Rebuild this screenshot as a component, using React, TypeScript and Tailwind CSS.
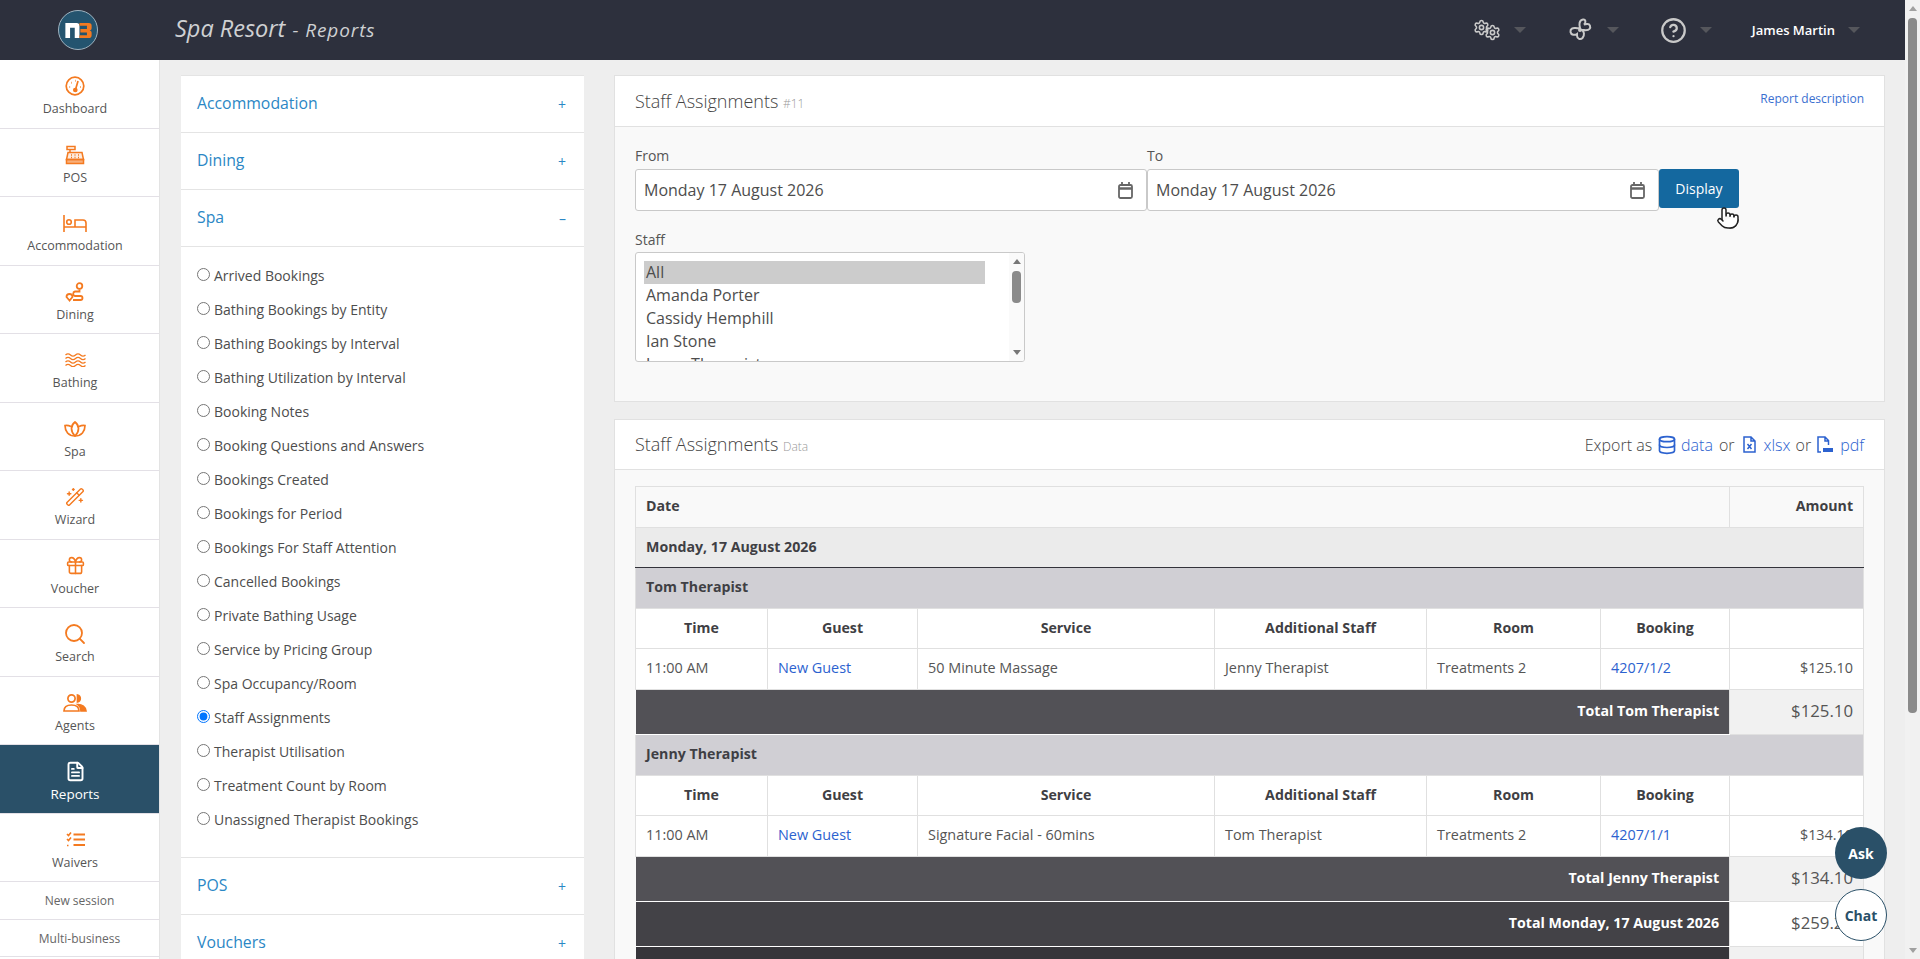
import { Database, FileText, Gift, HelpCircle, Pointer, Search, Settings, WandSparkles } from 'lucide-react'
import type { ReactNode } from 'react'

function RegisterIcon() {
  return (
    <svg width="20" height="20" viewBox="0 0 20 20" fill="none" stroke="currentColor" strokeWidth="1.5">
      <path d="M2 1.500h8v3H2zM5 4.500v3" />
      <path d="M3 7.500h14l1.500 7h-17z" fill="currentColor" fillOpacity="0.15" />
      <path d="M1.500 14.500h17v4h-17z" fill="currentColor" fillOpacity="0.6" />
      <path d="M6 10h1M9.500 10h1M13 10h1M6 12.500h1M9.500 12.500h1M13 12.500h1" />
    </svg>
  )
}

function BedIcon() {
  return (
    <svg width="24" height="17" viewBox="0 0 24 17" fill="none" stroke="currentColor" strokeWidth="1.600">
      <path d="M1 0v17M23 17V8a3 3 0 0 0-3-3h-8v7M1 12h22" />
      <circle cx="6" cy="7" r="2.300" />
    </svg>
  )
}

function RouteIcon() {
  return (
    <svg width="20" height="20" viewBox="0 0 20 20" fill="none" stroke="currentColor" strokeWidth="1.800">
      <circle cx="14.500" cy="4" r="2.800" />
      <path d="M14.500 7.500v2H10a2.300 2.300 0 0 0 0 4.500h5.500a1.800 1.800 0 0 1 0 4H8" />
      <path d="M4.500 18.500l-3-3.500a3 3 0 1 1 6 0z" />
    </svg>
  )
}

function BathIcon() {
  const wave = 'c1.700-1.600 3.300-1.600 5 0s3.300 1.600 5 0 3.300-1.600 5 0 3.300 1.600 5 0'
  return (
    <svg width="21" height="14" viewBox="0 0 21 14" fill="none" stroke="currentColor" strokeWidth="1.300">
      <path d={`M.5 2${wave}`} />
      <path d={`M.5 5.500${wave}`} />
      <path d={`M.5 9${wave}`} />
      <path d={`M.5 12.500${wave}`} />
    </svg>
  )
}

function LotusIcon() {
  return (
    <svg width="22" height="16" viewBox="0 0 22 16" fill="none" stroke="currentColor" strokeWidth="1.700">
      <path d="M11 1c2.500 2 3.500 4 3.500 6.500 0 3-1.500 5.500-3.500 7.500-2-2-3.500-4.500-3.500-7.500C7.500 5 8.500 3 11 1z" />
      <path d="M7 5.500C5 4.500 3 4.300 1 4.500c0 6 3.500 10.500 10 10.500s10-4.500 10-10.500c-2-.200-4 0-6 1" />
    </svg>
  )
}

function DashIcon() {
  return (
    <svg width="20" height="20" viewBox="0 0 20 20" fill="none" stroke="currentColor" strokeWidth="1.700">
      <circle cx="10" cy="10" r="8.800" />
      <path d="M13 5l-2.300 8" />
      <circle cx="10.300" cy="14" r="1.500" fill="currentColor" />
      <path d="M4.500 11h.6M6 6.800h.6M10 4.800h.6M15.200 11h.6" strokeWidth="2" />
    </svg>
  )
}

function AgentsIcon() {
  return (
    <svg width="24" height="18" viewBox="0 0 24 18" fill="none" stroke="currentColor" strokeWidth="1.700">
      <circle cx="8.500" cy="4.500" r="3.600" />
      <path d="M1 17c0-4 3-6 7.500-6s7.500 2 7.500 6z" />
      <path d="M14.500 1a3.600 3.600 0 0 1 0 7z" fill="currentColor" />
      <path d="M15 10.500c4 0 7.500 2.500 8 6.500h-5c0-2.800-1-5-3-6.500z" fill="currentColor" />
    </svg>
  )
}

function WaiversIcon() {
  return (
    <svg width="19" height="15" viewBox="0 0 19 15" fill="none" stroke="currentColor" strokeWidth="1.600">
      <path d="M1 2l1.500 1.500L5 .5M1 7l1.500 1.500L5 5.500" />
      <path d="M1 13.500h3" strokeDasharray="1.500 1.500" />
      <path d="M7.500 2.500H19M7.500 7.500H19M7.500 13H19" strokeWidth="2" />
    </svg>
  )
}

function CalendarIcon() {
  return (
    <svg width="15" height="17" viewBox="0 0 15 17" fill="none" stroke="#666666" strokeWidth="1.800">
      <rect x="1" y="3" width="13" height="13" rx="1.500" />
      <path d="M1 6.500h13" strokeWidth="2.500" />
      <path d="M4 0v3M11 0v3" />
    </svg>
  )
}

const navItems: { label: string; icon: ReactNode; active?: boolean }[] = [
  { label: 'Dashboard', icon: <DashIcon /> },
  { label: 'POS', icon: <RegisterIcon /> },
  { label: 'Accommodation', icon: <BedIcon /> },
  { label: 'Dining', icon: <RouteIcon /> },
  { label: 'Bathing', icon: <BathIcon /> },
  { label: 'Spa', icon: <LotusIcon /> },
  { label: 'Wizard', icon: <WandSparkles size={20} strokeWidth={1.700} /> },
  { label: 'Voucher', icon: <Gift size={21} strokeWidth={1.800} /> },
  { label: 'Search', icon: <Search size={24} strokeWidth={1.800} /> },
  { label: 'Agents', icon: <AgentsIcon /> },
  { label: 'Reports', icon: <FileText size={21} strokeWidth={2.200} />, active: true },
  { label: 'Waivers', icon: <WaiversIcon /> },
]

const reports = [
  'Arrived Bookings',
  'Bathing Bookings by Entity',
  'Bathing Bookings by Interval',
  'Bathing Utilization by Interval',
  'Booking Notes',
  'Booking Questions and Answers',
  'Bookings Created',
  'Bookings for Period',
  'Bookings For Staff Attention',
  'Cancelled Bookings',
  'Private Bathing Usage',
  'Service by Pricing Group',
  'Spa Occupancy/Room',
  'Staff Assignments',
  'Therapist Utilisation',
  'Treatment Count by Room',
  'Unassigned Therapist Bookings',
]

function Caret({ gap }: { gap: string }) {
  return <span className={`h-0 w-0 border-x-[6px] border-t-[6px] border-x-transparent border-t-[#55565c] ${gap}`} />
}

function Sidebar() {
  return (
    <aside className="flex w-[160px] shrink-0 flex-col border-r border-[#e3e3e3] bg-white text-[12.500px] text-[#555]">
      {navItems.map((item) => (
        <div
          key={item.label}
          className={`flex h-[68.500px] shrink-0 flex-col items-center border-b border-[#e3e0e6] pr-[9px] pt-[14px] ${
            item.active ? 'bg-[#2a5068] text-[13.500px] text-white' : ''
          }`}
        >
          <span className={`flex h-[24px] items-center ${item.active ? 'text-white' : 'text-[#f47a20]'}`}>{item.icon}</span>
          <span className="mt-[1px] leading-[20px]">{item.label}</span>
        </div>
      ))}
      <div className="flex h-[37.500px] shrink-0 items-center justify-center border-b border-[#e3e0e6] pt-[2px] text-[12px] text-[#666]">New session</div>
      <div className="flex h-[37.500px] shrink-0 items-center justify-center border-b border-[#e3e0e6] pt-[2px] text-[12px] text-[#666]">Multi-business</div>
    </aside>
  )
}

function AccordionHead({ title, open }: { title: string; open?: boolean }) {
  return (
    <div className="flex h-[57px] shrink-0 items-center justify-between border-b border-[#e4e4e4] pl-[16px] pr-[18px]">
      <span className="text-[15.800px] text-[#2b87c5]">{title}</span>
      <span className="text-[14px] text-[#2b87c5]">{open ? '–' : '+'}</span>
    </div>
  )
}

function ReportMenu() {
  return (
    <div className="mt-[15px] w-[403px] shrink-0 self-start border-t border-[#e4e4e4] bg-white">
      <AccordionHead title="Accommodation" />
      <AccordionHead title="Dining" />
      <AccordionHead title="Spa" open />
      <div className="flex h-[611px] flex-col border-b border-[#e4e4e4] pl-[16px] pt-[11px]">
        {reports.map((name) => (
          <label key={name} className="flex h-[34px] shrink-0 items-center text-[14px] text-[#4d4d4d]">
            <input type="radio" name="report" readOnly checked={name === 'Staff Assignments'} className="m-0 mb-[2px] mr-[4px] h-[13px] w-[13px]" />
            {name}
          </label>
        ))}
      </div>
      <AccordionHead title="POS" />
      <AccordionHead title="Vouchers" />
    </div>
  )
}

function DateField({ label, width }: { label: string; width: string }) {
  return (
    <div className={`flex flex-col ${width}`}>
      <span className="h-[25px] text-[14px] leading-[24px] text-[#555]">{label}</span>
      <div className="flex h-[42px] items-center justify-between rounded-[3px] border border-[#c9c9c9] bg-white pl-[8px] pr-[13px] text-[16px] text-[#4d4d4d]">
        Monday 17 August 2026
        <CalendarIcon />
      </div>
    </div>
  )
}

function FilterCard() {
  const staff = ['All', 'Amanda Porter', 'Cassidy Hemphill', 'Ian Stone', 'Jenny Therapist']
  return (
    <section className="mt-[15px] h-[327px] shrink-0 border border-[#e1e1e1] bg-[#f9f9f9]">
      <div className="flex h-[51px] items-center justify-between border-b border-[#e1e1e1] bg-white pl-[20px] pr-[20px]">
        <h2 className="pt-[1px] text-[18px] font-light text-[#444]">
          Staff Assignments <small className="text-[12px] text-[#999]">#11</small>
        </h2>
        <a className="pb-[5px] text-[12px] text-[#3a70d0]">Report description</a>
      </div>
      <div className="pl-[20px] pt-[17px]">
        <div className="flex items-end">
          <DateField label="From" width="w-[512px]" />
          <DateField label="To" width="w-[512px]" />
          <button className="mb-[3px] h-[39px] w-[80px] rounded-[3px] bg-[#14689f] text-[14px] text-white">Display</button>
        </div>
        <div className="mt-[17px] h-[24px] text-[14px] leading-[24px] text-[#555]">Staff</div>
        <div className="relative h-[110px] w-[390px] overflow-hidden rounded-[3px] border border-[#c9c9c9] bg-white pl-[8px] pt-[8px] text-[16px] text-[#4d4d4d]">
          {staff.map((name, i) => (
            <div key={name} className={`flex h-[23px] w-[341px] items-center pb-[2px] pl-[2px] ${i === 0 ? 'bg-[#cccccc]' : ''}`}>{name}</div>
          ))}
          <div className="absolute bottom-0 right-0 top-0 flex w-[15px] flex-col items-center justify-between bg-[#fafafa] py-[6px]">
            <span className="h-0 w-0 border-x-[4px] border-b-[5px] border-x-transparent border-b-[#777]" />
            <span className="absolute top-[18px] h-[32px] w-[9px] rounded-[4px] bg-[#8a8a8a]" />
            <span className="h-0 w-0 border-x-[4px] border-t-[5px] border-x-transparent border-t-[#777]" />
          </div>
        </div>
      </div>
    </section>
  )
}

function XlsxIcon() {
  return (
    <svg width="13" height="17" viewBox="0 0 13 17" fill="none" stroke="currentColor" strokeWidth="1.500" className="ml-[8px] mr-[8px]">
      <path d="M1 1h7l4 4v11H1zM8 1v4h4" />
      <path d="M4.500 8l4 5M8.500 8l-4 5" />
    </svg>
  )
}

function PdfIcon() {
  return (
    <svg width="16" height="17" viewBox="0 0 16 17" fill="none" stroke="currentColor" strokeWidth="1.500" className="ml-[6px] mr-[7px]">
      <path d="M4 16H1V1h7l3.500 3.500V9M8 1v4h3.500" />
      <rect x="6" y="12" width="10" height="4" fill="currentColor" stroke="none" />
    </svg>
  )
}

const th = 'border border-[#e0e0e0] px-[10px] pb-[2px] text-[14.200px] font-bold text-[#3f3f44]'
const td = 'border border-[#e0e0e0] px-[10px] pb-[3px] text-[14.400px] font-normal text-[#555]'
const link = 'text-[#2c62cf]'

function StaffRows({ staff, service, other, booking, amount }: { staff: string; service: string; other: string; booking: string; amount: string }) {
  return (
    <>
      <tr className="h-[41px] bg-[#d0cfd4]">
        <td colSpan={7} className={th}>{staff}</td>
      </tr>
      <tr className="h-[40px] bg-white">
        {['Time', 'Guest', 'Service', 'Additional Staff', 'Room', 'Booking', ''].map((h, i) => (
          <th key={i} className={`${th} text-center`}>{h}</th>
        ))}
      </tr>
      <tr className="h-[41px] bg-white">
        <td className={td}>11:00 AM</td>
        <td className={td}><a className={link}>New Guest</a></td>
        <td className={td}>{service}</td>
        <td className={td}>{other}</td>
        <td className={td}>Treatments 2</td>
        <td className={td}><a className={link}>{booking}</a></td>
        <td className={`${td} text-right`}>{amount}</td>
      </tr>
      <tr className="h-[45px]">
        <td colSpan={6} className="border-b border-white bg-[#525156] px-[10px] pb-[3px] text-right text-[14.200px] font-bold text-white">Total {staff}</td>
        <td className={`${td} bg-[#f1f1f1] text-right text-[16.800px]`}>{amount}</td>
      </tr>
    </>
  )
}

function DataCard() {
  return (
    <section className="mt-[17px] flex-1 border border-[#e1e1e1] bg-[#f9f9f9]">
      <div className="flex h-[50px] items-center justify-between border-b border-[#e1e1e1] bg-white pl-[20px] pr-[20px]">
        <h2 className="text-[18px] font-light text-[#444]">
          Staff Assignments <small className="text-[12px] text-[#999]">Data</small>
        </h2>
        <div className="flex items-center text-[16px] font-light text-[#444]">
          Export as
          <Database size={20} className="ml-[5px] mr-[4px] text-[#2c62cf]" />
          <a className={`${link} mr-[6px]`}>data</a> or
          <span className={link}><XlsxIcon /></span>
          <a className={`${link} mr-[5px]`}>xlsx</a> or
          <span className={link}><PdfIcon /></span>
          <a className={link}>pdf</a>
        </div>
      </div>
      <div className="pl-[20px] pt-[16px]">
        <table className="w-[1228px] table-fixed border-collapse">
          <colgroup>
            <col className="w-[132px]" />
            <col className="w-[150px]" />
            <col className="w-[297px]" />
            <col className="w-[212px]" />
            <col className="w-[174px]" />
            <col className="w-[129px]" />
            <col className="w-[134px]" />
          </colgroup>
          <tbody>
            <tr className="h-[41px] bg-[#f9f9f9]">
              <th colSpan={6} className={`${th} text-left`}>Date</th>
              <th className={`${th} text-right`}>Amount</th>
            </tr>
            <tr className="h-[40px] border-b border-[#33333a] bg-[#ebebeb]">
              <td colSpan={7} className={`${th} border-b-[#33333a]`}>Monday, 17 August 2026</td>
            </tr>
            <StaffRows staff="Tom Therapist" service="50 Minute Massage" other="Jenny Therapist" booking="4207/1/2" amount="$125.10" />
            <StaffRows staff="Jenny Therapist" service="Signature Facial - 60mins" other="Tom Therapist" booking="4207/1/1" amount="$134.10" />
            <tr className="h-[45px]">
              <td colSpan={6} className="border-b border-white bg-[#434247] px-[10px] pb-[3px] text-right text-[14.200px] font-bold text-white">Total Monday, 17 August 2026</td>
              <td className={`${td} bg-white text-right text-[16.800px]`}>$259.20</td>
            </tr>
            <tr className="h-[45px]">
              <td colSpan={6} className="bg-[#36353a]" />
              <td className={`${td} bg-[#f1f1f1]`} />
            </tr>
          </tbody>
        </table>
      </div>
    </section>
  )
}

function Header() {
  return (
    <header className="flex h-[60px] shrink-0 items-center bg-[#2d303d]">
      <div className="flex w-[175px] justify-center pr-[19px]">
        <div className="flex h-[40px] w-[40px] items-center justify-center rounded-full border border-[#9fb3c0] bg-[#24546f]">
          <svg width="27" height="15" viewBox="0 0 28 16">
            <path d="M0 16V0h12a3 3 0 0 1 3 3v13h-5V5H5v11z" fill="#fff" />
            <path d="M15 0h10a3 3 0 0 1 3 3v2.500a2.500 2.500 0 0 1-2 2.500 2.500 2.500 0 0 1 2 2.500V13a3 3 0 0 1-3 3H15v-3h8v-3h-7V6.500h7V3h-8z" fill="#f47a20" />
          </svg>
        </div>
      </div>
      <div className="pb-[3px] text-[23.500px] italic text-[#cfd0d3]">
        Spa Resort <span className="ml-[1px] text-[19px] tracking-[0.9px]">- Reports</span>
      </div>
      <div className="ml-auto mr-[45px] flex items-center text-[#c9c9c9]">
        <span className="relative h-[22px] w-[28px]">
          <Settings size={17} strokeWidth={2.200} className="absolute left-0 top-0" />
          <Settings size={17} strokeWidth={2.200} className="absolute bottom-0 right-0" />
        </span>
        <Caret gap="ml-[13px]" />
        <svg width="24" height="24" viewBox="0 0 24 24" fill="none" stroke="currentColor" strokeWidth="2" className="ml-[42px]">
          <path d="M12 10c-1-3-1-8 3-8.500 3-.300 3 3.500 1 5l3-.5c3-.500 4 3 2.500 5-1.500 2-5 1-7.500 1 2 1.500 3 5 .500 8-2 2-5.500 1-5.500-2.500V16c-2 1.500-6 1-6.500-2-.500-3 2.500-4.500 5-4 2 .300 3 .500 4.500 0z" />
          <circle cx="12" cy="12" r="1" fill="currentColor" />
        </svg>
        <Caret gap="ml-[15px]" />
        <HelpCircle size={27} strokeWidth={2} className="ml-[41px]" />
        <Caret gap="ml-[13px]" />
        <span className="ml-[40px] pt-[2px] text-[13px] font-semibold text-white">James Martin</span>
        <Caret gap="ml-[13px]" />
      </div>
    </header>
  )
}

export default function App() {
  return (
    <div className="relative flex h-screen w-full overflow-hidden bg-[#eeeeee] font-['Open_Sans',sans-serif]">
      <div className="flex min-w-0 flex-1 flex-col">
        <Header />
        <div className="flex min-h-0 flex-1">
          <Sidebar />
          <div className="ml-[21px] flex gap-[30px]">
            <ReportMenu />
            <div className="flex w-[1271px] flex-col">
              <FilterCard />
              <DataCard />
            </div>
          </div>
        </div>
      </div>
      <div className="relative flex w-[15px] shrink-0 flex-col items-center justify-between bg-[#f1f1f1] py-[6px]">
        <span className="h-0 w-0 border-x-[4px] border-b-[5px] border-x-transparent border-b-[#a0a0a0]" />
        <span className="absolute top-[18px] h-[695px] w-[9px] rounded-[4px] bg-[#8a8a8a]" />
        <span className="h-0 w-0 border-x-[4px] border-t-[5px] border-x-transparent border-t-[#a0a0a0]" />
      </div>

      <div className="absolute left-[1835px] top-[827px] flex h-[52px] w-[52px] items-center justify-center rounded-full bg-[#2a5068] text-[14px] font-bold text-white">Ask</div>
      <div className="absolute left-[1835px] top-[889px] flex h-[52px] w-[52px] items-center justify-center rounded-full border border-[#2a5068] bg-white text-[14px] font-bold text-[#2a5068]">Chat</div>
      <Pointer size={24} strokeWidth={1.500} className="absolute left-[1716px] top-[206px] fill-white text-[#222]" />
    </div>
  )
}
